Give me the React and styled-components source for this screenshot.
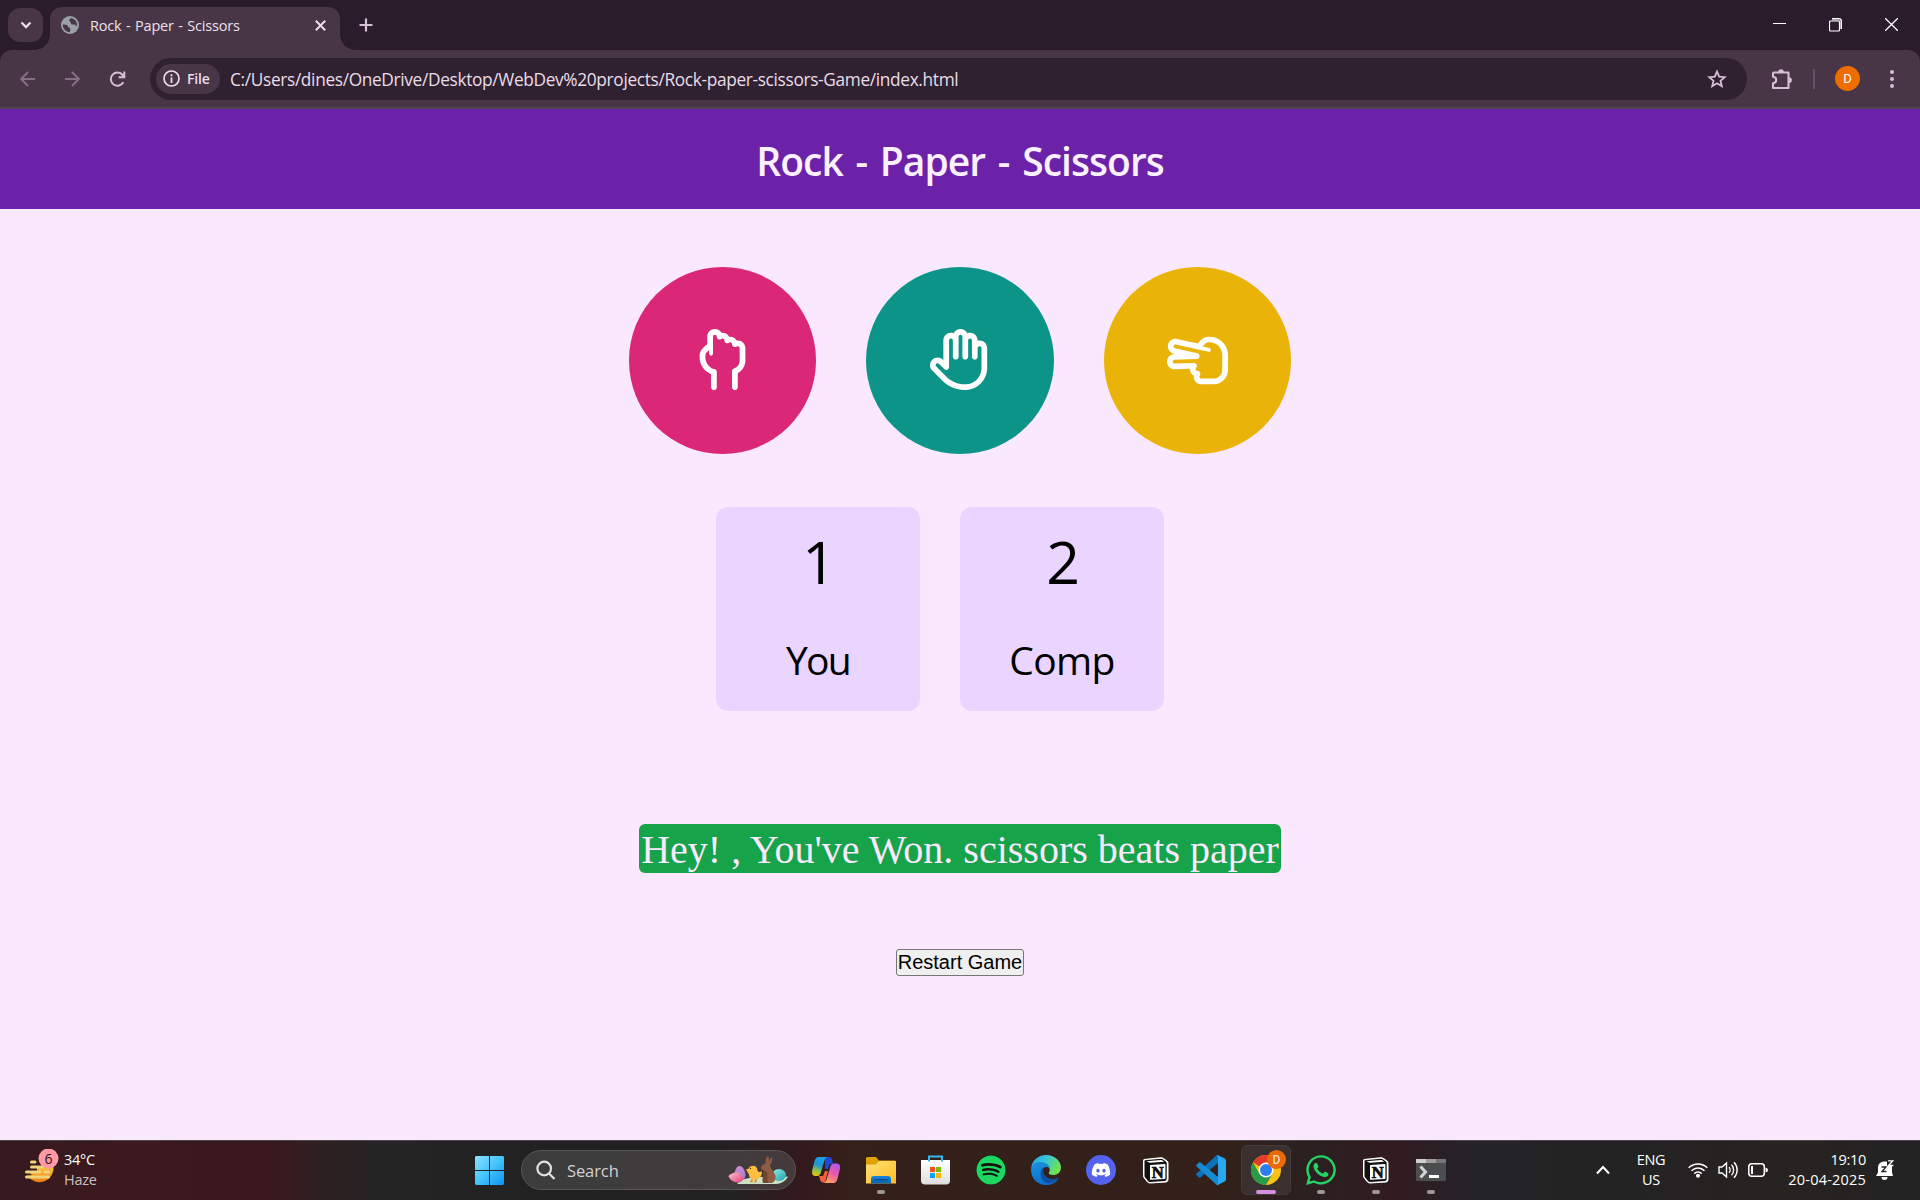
import React from "react";
import styled, { createGlobalStyle } from "styled-components";
import { FaRegHand, FaRegHandScissors, FaRegHandBackFist, FaSpotify, FaDiscord, FaWhatsapp } from "react-icons/fa6";

const ui = `"Segoe UI", "Open Sans", "Noto Sans", sans-serif`;

const GlobalStyle = createGlobalStyle`
  * { box-sizing: border-box; }
  body { margin: 0; background: #fae8ff; overflow: hidden; }
  svg { display: block; flex: none; }
`;

const Screen = styled.div`
  width: 1920px;
  height: 1200px;
  display: flex;
  flex-direction: column;
  font-family: ${ui};
`;

/* ---------- browser ---------- */
const TabStrip = styled.div`
  height: 50px;
  flex: none;
  background: #2a1c2b;
  display: flex;
  align-items: flex-start;
  padding: 7px 0 0 8px;
`;
const TabSearch = styled.div`
  width: 35px;
  height: 34px;
  margin: 1px 7px 0 0;
  border-radius: 12px;
  background: #483546;
  display: grid;
  place-items: center;
`;
const Tab = styled.div`
  position: relative;
  width: 290px;
  height: 43px;
  padding: 0 14.5px 7px 11px;
  border-radius: 12px 12px 0 0;
  background: #483546;
  display: flex;
  align-items: center;
  &::before, &::after {
    content: "";
    position: absolute;
    bottom: 0;
    width: 15px;
    height: 15px;
  }
  &::before { left: -15px; background: radial-gradient(circle at 0 0, transparent 14.5px, #483546 15px); }
  &::after { right: -15px; background: radial-gradient(circle at 100% 0, transparent 14.5px, #483546 15px); }
`;
const TabTitle = styled.span`
  flex: 1;
  margin-left: 11px;
  padding-top: 1px;
  font-size: 14.5px;
  line-height: 20px;
  letter-spacing: -0.2px;
  word-spacing: 1px;
  white-space: nowrap;
  color: #ece0ea;
`;
const NewTab = styled.div`
  padding: 11px 0 0 19px;
`;
const WindowButtons = styled.div`
  margin-left: auto;
  display: flex;
  gap: 43px;
  padding: 11px 22px 0 0;
`;
const ToolbarBack = styled.div`
  height: 59px;
  flex: none;
  background: #2a1c2b;
`;
const Toolbar = styled.div`
  height: 59px;
  background: #483546;
  border-radius: 12px 12px 0 0;
  border-bottom: 2px solid #4b454f;
  display: flex;
  align-items: center;
  padding: 0 22px 0 20px;
`;
const NavButtons = styled.div`
  display: flex;
  gap: 29.5px;
  width: 130px;
`;
const Address = styled.div`
  width: 1597px;
  height: 42px;
  margin-right: 24px;
  border-radius: 21px;
  background: #302131;
  display: flex;
  align-items: center;
  padding: 0 20px 0 6px;
`;
const Chip = styled.div`
  width: 64px;
  height: 30px;
  border-radius: 15px;
  background: #483546;
  display: flex;
  align-items: center;
  gap: 7px;
  padding-left: 7px;
  font-size: 14px;
  font-weight: 600;
  letter-spacing: -0.2px;
  color: #ecdcea;
`;
const Url = styled.span`
  flex: 1;
  margin-left: 10px;
  padding-top: 2px;
  font-size: 17.3px;
  line-height: 24px;
  letter-spacing: -0.34px;
  white-space: nowrap;
  color: #e9dde8;
`;
const Divider = styled.div`
  width: 2px;
  height: 20px;
  margin: 0 20px;
  background: #66506a;
`;
const Avatar = styled.div`
  width: 25px;
  height: 25px;
  border-radius: 50%;
  background: #ef6c00;
  color: #fff;
  font: 13px Roboto, sans-serif;
  display: grid;
  place-items: center;
`;

/* ---------- game ---------- */
const Header = styled.header`
  height: 100px;
  flex: none;
  background: #6b21a8;
  display: flex;
  align-items: center;
  justify-content: center;
  padding-top: 2px;
  color: #faf0ff;
  font-size: 39px;
  font-weight: 600;
  white-space: nowrap;
  letter-spacing: -0.95px;
  word-spacing: 3.5px;
`;
const Game = styled.main`
  height: 931px;
  flex: none;
  background: #fae8ff;
  display: flex;
  flex-direction: column;
  align-items: center;
`;
const Choices = styled.div`
  display: flex;
  gap: 50px;
  margin-top: 58px;
`;
const Choice = styled.div`
  width: 187.5px;
  height: 187px;
  padding-bottom: 3px;
  border-radius: 50%;
  background: ${(p) => p.$color};
  color: #fff;
  font-size: 61px;
  display: grid;
  place-items: center;
`;
const Scores = styled.div`
  display: flex;
  gap: 40px;
  margin: 53px 40px 0 0;
`;
const Score = styled.div`
  width: 204px;
  height: 204px;
  border-radius: 12px;
  background: #e9d5ff;
  color: #000;
  display: flex;
  flex-direction: column;
  align-items: center;
`;
const Points = styled.div`
  margin-top: 11px;
  padding-left: 2px;
  font-size: 59px;
  line-height: 86px;
`;
const Label = styled.div`
  margin-top: 26px;
  font-size: 39px;
  line-height: 60px;
  letter-spacing: ${(p) => p.$track};
`;
const Message = styled.div`
  margin-top: 113px;
  width: 642px;
  height: 49px;
  border-radius: 6px;
  background: #16a34a;
  color: #fae8ff;
  font: 40px/51px "Times New Roman", "Liberation Serif", serif;
  text-align: center;
  white-space: nowrap;
`;
const Restart = styled.button`
  margin: 76px 0 0;
  width: 128px;
  height: 27px;
  padding: 0 0 1px;
  border: 1.25px solid #767676;
  border-radius: 3px;
  background: #efefef;
  color: #000;
  font: 20px/24px Arial, "Liberation Sans", sans-serif;
  white-space: nowrap;
`;

/* ---------- taskbar ---------- */
const Taskbar = styled.footer`
  height: 60px;
  flex: none;
  border-top: 1px solid #4c474b;
  background: linear-gradient(90deg, #351a1f 0, #3b191e 120px, #39191e 280px, #2d2022 325px, #242424 385px, #212122 560px, #222122 730px, #33191d 800px, #35201b 850px, #33201a 1220px, #2b2020 1310px, #321b21 1395px, #242328 1470px, #232324 1560px, #262321 1800px, #232324 1920px);
  display: flex;
  align-items: center;
  padding-bottom: 1px;
  color: #fff;
`;
const Weather = styled.div`
  width: 475px;
  padding-left: 24px;
  display: flex;
  align-items: center;
  gap: 4px;
`;
const WeatherBadge = styled.div`
  padding-bottom: 4px;
`;
const Lines = styled.div`
  display: flex;
  flex-direction: column;
  align-items: ${(p) => p.$align || "flex-start"};
  padding-bottom: 1px;
  font-size: 14.5px;
  line-height: 20px;
  letter-spacing: -0.3px;
  white-space: nowrap;
`;
const Dim = styled.span`
  color: #c9bfc1;
`;
const DateText = styled.span`
  letter-spacing: 0.2px;
`;
const SearchBox = styled.div`
  width: 275px;
  height: 40px;
  margin: 0 2px 0 17px;
  border: 1px solid #5a5656;
  border-radius: 20px;
  background: linear-gradient(90deg, #3c3c3c, #3f3c3d 60%, #45393c);
  display: flex;
  align-items: center;
  padding: 0 7px 0 14px;
  font-size: 16.5px;
  letter-spacing: -0.1px;
  color: #d2d0d1;
`;
const SearchLabel = styled.span`
  flex: 1;
  margin-left: 11px;
`;
const Slot = styled.div`
  position: relative;
  width: 55px;
  height: 58px;
  display: grid;
  place-items: center;
  &::after {
    content: "";
    position: absolute;
    display: ${(p) => (p.$state ? "block" : "none")};
    bottom: 5px;
    left: 50%;
    width: ${(p) => (p.$state === "active" ? "20px" : "8px")};
    height: 4px;
    border-radius: 2px;
    transform: translateX(-50%);
    background: ${(p) => (p.$state === "active" ? "#d68fe0" : "#9d9896")};
  }
`;
const ActiveTile = styled.div`
  width: 50px;
  height: 50px;
  border-radius: 6px;
  border: 1px solid #443a39;
  background: #3a302f;
  display: grid;
  place-items: center;
`;
const Glyph = styled.span`
  display: flex;
  color: ${(p) => p.$color};
`;
const Round = styled.span`
  width: 30px;
  height: 30px;
  border-radius: 50%;
  background: ${(p) => p.$bg};
  color: ${(p) => p.$color};
  font-size: ${(p) => p.$size};
  display: grid;
  place-items: center;
`;
const Tray = styled.div`
  margin-left: auto;
  display: flex;
  align-items: center;
  padding-right: 26px;
`;
const TrayIcons = styled.div`
  display: flex;
  align-items: center;
  gap: 10px;
  margin: 0 21px 0 22px;
`;
const TrayLang = styled.div`
  width: 30px;
  margin-left: 26px;
`;
const Clock = styled.div`
  width: 77px;
  margin-right: 10px;
`;

const Line = ({ w, h, d, c = "#eadfe8", s = 2 }) => (
  <svg width={w} height={h} viewBox={`0 0 ${w} ${h}`} fill="none" stroke={c} strokeWidth={s}>
    <path d={d} />
  </svg>
);

const Globe = () => (
  <svg width="18" height="18" viewBox="0 0 18 18">
    <circle cx="9" cy="9" r="9" fill="#9aa0a6" />
    <path d="M1.8 8.4c2.3 0 4 .2 4.7 1.1.6.8.3 1.7 1.5 2 1.3.3 1.3 1.1 1.2 2.1 0 1 .1 1.7-.6 2.6A7.2 7.2 0 0 1 1.8 8.4zM9.800 1.900c-.4 1.200-1.800 1.500-1.600 2.700.2 1.100 1.300 1 1.600 1.900.3 1 0 1.700 1.300 1.900 1.300.3 2.100-.3 3.300.5.9.6 1 1.300 1.700 1.400A7.300 7.300 0 0 0 9.800 1.900z" fill="#483546" />
  </svg>
);

const Puzzle = () => (
  <svg width="22" height="22" viewBox="0 0 22 22">
    <path d="M3 4.500h14.500v15.500H2V15.200c2.200-.2 3.200-1.500 3.200-3.200S4.200 9.100 2 8.800V5.500a1 1 0 0 1 1-1z" fill="none" stroke="#d6bfd6" strokeWidth="2.100" strokeLinejoin="round" />
    <path d="M7.200 4a2.800 2.800 0 0 1 5.600 0zM18 9.200a2.900 2.900 0 0 1 0 5.800z" fill="#d6bfd6" />
  </svg>
);

const WeatherIcon = () => (
  <svg width="36" height="38" viewBox="0 0 36 38">
    <defs>
      <linearGradient id="sun" x1="0" y1="0" x2="0" y2="1">
        <stop offset="0" stopColor="#fcc53c" />
        <stop offset="1" stopColor="#ef7a14" />
      </linearGradient>
    </defs>
    <path d="M3.500 26.500H8l-3-4h8V17h16.500A14.300 14.300 0 0 1 3.500 27z" fill="url(#sun)" />
    <path d="M7.500 13h3.500M7.500 18H18M2.500 23H16M21 23h4M2.500 28h22" stroke="#f0d47c" strokeWidth="3" strokeLinecap="round" />
    <circle cx="24.500" cy="9.500" r="10" fill="#ff99a4" />
    <text x="24.500" y="14.500" textAnchor="middle" fontSize="14" fontFamily="Open Sans, sans-serif" fill="#2b1114">6</text>
  </svg>
);

const WindowsLogo = () => (
  <svg width="29" height="29" viewBox="0 0 29 29">
    <defs>
      <linearGradient id="win" x1="0" y1="0" x2="1" y2="1">
        <stop offset="0" stopColor="#8de1ff" />
        <stop offset=".5" stopColor="#45c3fb" />
        <stop offset="1" stopColor="#0f93f5" />
      </linearGradient>
    </defs>
    <path d="M1 0h13v14H0V1zM15 0h13l1 1v13H15zM0 15h14v14H1l-1-1zM15 15h14v13l-1 1H15z" fill="url(#win)" />
  </svg>
);

const Easter = () => (
  <svg width="60" height="30" viewBox="0 0 60 30">
    <defs>
      <linearGradient id="eggA" x1="0" y1="0" x2="0" y2="1"><stop offset="0" stopColor="#d88ad3" /><stop offset="1" stopColor="#8f7fd0" /></linearGradient>
      <linearGradient id="eggB" x1="0" y1="0" x2="1" y2="1"><stop offset="0" stopColor="#ffc0d2" /><stop offset="1" stopColor="#e2427f" /></linearGradient>
      <linearGradient id="eggC" x1="0" y1="0" x2="1" y2="1"><stop offset="0" stopColor="#8defe5" /><stop offset="1" stopColor="#1d9fae" /></linearGradient>
    </defs>
    <path d="M9 29c4-5 12-7 24-7s19 0 27-.5c-2 4-6 7-12 7.500z" fill="#c9e3c8" />
    <path d="M11.500 11c3 0 6 5 6 9 0 3-2 5-5 5s-6-2-6-6c0-3 2-8 5-8z" fill="url(#eggA)" />
    <path d="M.5 21c3-3 8-5 12-2 3 2.500 3.500 5.500 1 7.500C8 29 2 26 .5 21z" fill="url(#eggB)" />
    <ellipse cx="51" cy="20" rx="7" ry="6" fill="url(#eggC)" />
    <path d="M18 14.500l3-1c0-3 7-4 8 0 .5 2 .5 3 2 3.500l3-.5c0 4-2 8-7 8-4 0-6-2-6-5z" fill="#ffbe3d" />
    <path d="M24 24v2.500h-2M28 24v2.500h-2" stroke="#e78125" strokeWidth="1.300" fill="none" />
    <circle cx="22.500" cy="13.500" r=".7" fill="#5a3514" />
    <path d="M35 28c-1-4 1-8 1-12.500-3-1-4-3-2-5 1-1 3-2 4-2-1-3 0-6 2-7.500 1 2 1 3.500 1 5.500 1-2.500 2-4 3.500-4.500 0 3-1 6-2.500 8 0 4 5 6.500 5.500 11.500.3 3-1 6-4 6.500z" fill="#8f5b43" />
    <path d="M36 16c-1 4-2 8-1 12h5c-1-4 0-8-1-12z" fill="#754431" />
  </svg>
);

const Copilot = () => (
  <svg width="28" height="26" viewBox="0 0 28 26">
    <defs>
      <linearGradient id="cpA" x1=".4" y1="0" x2=".2" y2="1"><stop offset="0" stopColor="#18a2ee" /><stop offset=".4" stopColor="#2196cf" /><stop offset=".7" stopColor="#8cc152" /><stop offset="1" stopColor="#f5c400" /></linearGradient>
      <linearGradient id="cpB" x1=".7" y1="0" x2=".3" y2="1"><stop offset="0" stopColor="#b057e8" /><stop offset=".5" stopColor="#ea5aa8" /><stop offset="1" stopColor="#ffa25c" /></linearGradient>
    </defs>
    <path d="M13 0h4c2.500 0 3 2 3.700 5L21 7h-3l-2 5-3 0z" fill="#2148cf" />
    <path d="M7 19h4l2-5 3 0-3 11.500h-2C8.500 25.500 8 22 7 19z" fill="#f2603c" />
    <path d="M6.500 0H15c-2 1-2.500 3-3.300 6L9 15c-1 3.500-2 4-4 4H3.500C-.4 19-.3 15.500.5 12L2 6C3 2 4 0 6.500 0z" fill="url(#cpA)" />
    <path d="M21.500 26H12c2-1 2.500-3 3.300-6L18 11c1-3.500 2-4.500 4-4.500h2.500c4 0 3.900 3.500 3.100 7L26 20c-1 4-2 6-4.500 6z" fill="url(#cpB)" />
  </svg>
);

const Folder = () => (
  <svg width="30" height="28" viewBox="0 0 30 28">
    <defs>
      <linearGradient id="fol" x1="0" y1="0" x2="1" y2="1"><stop offset="0" stopColor="#ffe07b" /><stop offset="1" stopColor="#fdbe20" /></linearGradient>
      <linearGradient id="folb" x1="0" y1="0" x2="0" y2="1"><stop offset="0" stopColor="#1785d8" /><stop offset="1" stopColor="#0a62b0" /></linearGradient>
    </defs>
    <path d="M0 2.500Q0 1 1.500 1H10l3 3.500h16v8H0z" fill="#e0a000" />
    <path d="M0 8.500h9.500L13 5h17v22.500H0z" fill="url(#fol)" />
    <path d="M5 27.500V23q0-3 3-3h14q3 0 3 3v4.500z" fill="url(#folb)" />
    <path d="M8.500 23.700h13" stroke="#0a4685" strokeWidth="1.200" />
  </svg>
);

const Store = () => (
  <svg width="29" height="30" viewBox="0 0 29 30">
    <defs><linearGradient id="sto" x1="0" y1="0" x2="0" y2="1"><stop offset="0" stopColor="#fff" /><stop offset="1" stopColor="#dedede" /></linearGradient></defs>
    <path d="M0 5h29v20.500q0 4-4 4H4q-4 0-4-4z" fill="url(#sto)" />
    <path d="M8 6.500V1.500h13v5" fill="none" stroke="#33b8ec" strokeWidth="2" />
    <path d="M9 12h5v5H9z" fill="#f25022" /><path d="M15 12h5v5h-5z" fill="#7fba00" />
    <path d="M9 18h5v5H9z" fill="#00a4ef" /><path d="M15 18h5v5h-5z" fill="#ffb900" />
  </svg>
);

const Edge = () => (
  <svg width="30" height="30" viewBox="0 0 30 30">
    <defs>
      <linearGradient id="edT" x1="0" y1="0" x2="1" y2=".5"><stop offset="0" stopColor="#2b9be0" /><stop offset=".45" stopColor="#34c4dc" /><stop offset="1" stopColor="#6fe34f" /></linearGradient>
      <linearGradient id="edB" x1="0" y1="0" x2=".4" y2="1"><stop offset="0" stopColor="#1a93dd" /><stop offset="1" stopColor="#0a6fd0" /></linearGradient>
    </defs>
    <path d="M.2 13C1 5.500 7 0 15 0c8.500 0 15 6 15 12.500 0 4.500-3.300 7.500-7.500 7.500-3.500 0-5.500-1.300-4.500-2.800 2.200-3-.2-6.200-4-7.700C8 7.500 3 9.500.2 13z" fill="url(#edT)" />
    <path d="M.1 14C1 9 5 6.800 9.500 7c5 .2 9.300 3 9.400 7-3-4-7.900-1.500-7.900 3.500 0 6 5 10 11.500 8.500l4.500-1.500C24.500 28 20 30 15 30 6 30-.6 22.500.1 14z" fill="url(#edB)" />
    <path d="M11.800 13c-3 3-3.500 10.500 2 14 4.500 2.800 9.500 1 13.500-3.500.5-.8 0-1.200-.7-.8-5.500 2.800-12.600.6-14.100-5.200-.4-1.700-.6-3.200-.7-4.500z" fill="#0e4f9f" />
  </svg>
);

const Notion = () => (
  <svg width="26" height="27" viewBox="0 0 26 27">
    <path d="M1 2.500L18 .7q1.500 0 2.500.8L24 4q1 .8 1 2v16.500q0 2.200-2 2.500L7 26q-1.500 0-2.500-1L1.300 21q-.8-1-.8-2.500V3.500q0-1 .5-1z" fill="#fff" stroke="#fff" />
    <path d="M2 3.200l16-1.500q1 0 1.800.5l3 2.300q.9.700.9 2V22q0 1.700-1.700 1.900L7 24.900q-1.300 0-2-.9l-3-3.800q-.5-.7-.5-2V4q0-.7.5-.8z" fill="#111" />
    <path d="M3.300 4.200l14.500-1.300q.8 0 1.300.4l2 1.500-14 1q-.8 0-1.400-.5z" fill="#fff" />
    <path d="M7 8.700q0-.7.700-.8l14-.8q.7 0 .7.700v13.400q0 .8-.8.800l-13.700.8q-.9 0-.9-.9z" fill="#fff" />
    <text x="14.700" y="20.500" textAnchor="middle" fontFamily="Liberation Serif, serif" fontWeight="700" fontSize="16.500" fill="#111" stroke="#111" strokeWidth=".7">N</text>
  </svg>
);

const VsCode = () => (
  <svg width="30" height="30" viewBox="0 0 30 30">
    <path d="M22 8L4.500 22.500q-.8.600-1.500 0L.6 20.300q-.9-.9 0-1.700L20.300.6q1-.9 2.200-.3z" fill="#0b72b9" />
    <path d="M22 22L4.500 7.500q-.8-.6-1.500 0L.6 9.700q-.9.900 0 1.700l19.700 18q1 .9 2.200.3z" fill="#168bd2" />
    <path d="M22 .3l6.300 3q1.700.8 1.700 2.500v18.400q0 1.700-1.700 2.500l-6.300 3q-1.200.4-2-.4 2 .5 2-2V2.700q0-2.500-2-2Q20.800-.1 22 .3z" fill="#2aa7f2" />
  </svg>
);

const Chrome = () => (
  <svg width="40" height="40" viewBox="0 0 40 40">
    <circle cx="20" cy="20" r="15" fill="#fbc116" />
    <path d="M20 20L7 12.500A15 15 0 0 1 33 12.500H20z" fill="#e33b2e" />
    <path d="M7 12.500A15 15 0 0 0 20 35l6.500-11.300L20 20l-6.500 3.700z" fill="#2a9b48" />
    <circle cx="20" cy="20" r="7.500" fill="#fff" />
    <circle cx="20" cy="20" r="6" fill="#2f7cf0" />
    <circle cx="30.500" cy="9.500" r="9.500" fill="#e96a07" />
    <text x="30.500" y="13.800" textAnchor="middle" fontFamily="Roboto, sans-serif" fontWeight="500" fontSize="12" fill="#ffd9ba">D</text>
  </svg>
);

const Terminal = () => (
  <svg width="30" height="22" viewBox="0 0 30 22">
    <path d="M0 0h30v20.500q0 1.500-1.500 1.500h-27Q0 22 0 20.500z" fill="#4b4d4f" />
    <path d="M0 0h10v4H0z" fill="#d0cecf" /><path d="M10 0h10v4H10z" fill="#a09d9e" /><path d="M20 0h10v4H20z" fill="#777475" />
    <path d="M4.500 7.500l5 5.500-5 5.500" fill="none" stroke="#d5d5d5" strokeWidth="3" />
    <path d="M13 16h10v3H13z" fill="#fff" />
  </svg>
);

const Bell = () => (
  <svg width="18" height="20" viewBox="0 0 18 20">
    <path d="M2 7a6 6 0 0 1 6-5.500h3V6h5v6.500l1 3.500H0l2-3.500z" fill="#fff" />
    <path d="M5.500 17h6a3 3 0 0 1-6 0z" fill="#fff" />
    <path d="M5.500 7h4.500L6 11.500h4.500" fill="none" stroke="#232324" strokeWidth="1.300" />
    <path d="M12 .9h4.700L12.500 5.500h4.800" fill="none" stroke="#fff" strokeWidth="1.400" />
  </svg>
);

export default function App() {
  return (
    <Screen>
      <GlobalStyle />
      <TabStrip>
        <TabSearch><Line w={12} h={8} d="M1.500 1.500L6 6l4.500-4.500" s={2.300} /></TabSearch>
        <Tab>
          <Globe />
          <TabTitle>Rock - Paper - Scissors</TabTitle>
          <Line w={11} h={11} d="M.8.800l9.400 9.400M10.200.800L.8 10.200" s={2} />
        </Tab>
        <NewTab><Line w={14} h={14} d="M7 .5v13M.5 7h13" c="#d6bfd6" s={2.200} /></NewTab>
        <WindowButtons>
          <Line w={13} h={13} d="M0 5.500h13" c="#fff" s={1} />
          <svg width="13" height="14" viewBox="0 0 13 14" fill="none">
            <path d="M3 1.500h7.500q1.500 0 1.500 1.500v8" stroke="#a89fa9" strokeWidth="2" />
            <path d="M3 .5h7.500q2 0 2 2V11" stroke="#fff" />
            <rect x=".5" y="3" width="10" height="10" rx="1" stroke="#fff" strokeWidth="1.200" />
          </svg>
          <Line w={13} h={13} d="M0 0l13 13M13 0L0 13" c="#fff" s={1.300} />
        </WindowButtons>
      </TabStrip>
      <ToolbarBack>
        <Toolbar>
          <NavButtons>
            <Line w={15} h={16} d="M15 8H1.500M8 1L1.200 8 8 15" c="#856d85" />
            <Line w={15} h={16} d="M0 8h13.500M7 1l6.800 7L7 15" c="#856d85" />
            <Line w={17} h={16} d="M14.300 11.200A6.600 6.600 0 1 1 13.600 4l1.400 1.700M15.300.500v5.700H9.600" c="#d6bfd6" />
          </NavButtons>
          <Address>
            <Chip>
              <svg width="17" height="17" viewBox="0 0 17 17">
                <circle cx="8.500" cy="8.500" r="7.500" fill="none" stroke="#ecdcea" strokeWidth="1.700" />
                <path d="M7.600 7.500h1.800V13H7.600zM7.600 4.300h1.800v1.900H7.600z" fill="#ecdcea" />
              </svg>
              File
            </Chip>
            <Url>C:/Users/dines/OneDrive/Desktop/WebDev%20projects/Rock-paper-scissors-Game/index.html</Url>
            <Line w={20} h={19} d="M10 2.600l2.200 5.100 5.500.5-4.200 3.600 1.300 5.400-4.800-2.900-4.800 2.900 1.300-5.400-4.200-3.600 5.500-.5z" c="#d6bfd6" s={1.800} />
          </Address>
          <Puzzle />
          <Divider />
          <Avatar>D</Avatar>
          <svg width="38" height="20" viewBox="0 0 38 20" fill="#d6bfd6">
            <circle cx="32" cy="3" r="2" /><circle cx="32" cy="10" r="2" /><circle cx="32" cy="17" r="2" />
          </svg>
        </Toolbar>
      </ToolbarBack>

      <Header>Rock - Paper - Scissors</Header>
      <Game>
        <Choices>
          <Choice $color="#db2777"><FaRegHandBackFist /></Choice>
          <Choice $color="#0d9488"><FaRegHand /></Choice>
          <Choice $color="#eab308"><FaRegHandScissors /></Choice>
        </Choices>
        <Scores>
          <Score><Points>1</Points><Label $track="-1.8px">You</Label></Score>
          <Score><Points>2</Points><Label $track="-0.6px">Comp</Label></Score>
        </Scores>
        <Message>Hey! , You've Won. scissors beats paper</Message>
        <Restart>Restart Game</Restart>
      </Game>

      <Taskbar>
        <Weather>
          <WeatherBadge><WeatherIcon /></WeatherBadge>
          <Lines><span>34°C</span><Dim>Haze</Dim></Lines>
        </Weather>
        <WindowsLogo />
        <SearchBox>
          <Line w={20} h={20} d="M15 8.500a6.800 6.800 0 1 1-13.600 0a6.800 6.800 0 1 1 13.600 0M13 13.500l5.500 5.500" c="#e3e0e1" s={2.200} />
          <SearchLabel>Search</SearchLabel>
          <Easter />
        </SearchBox>
        <Slot><Copilot /></Slot>
        <Slot $state="open"><Folder /></Slot>
        <Slot><Store /></Slot>
        <Slot><Round $bg="#15100e" $color="#1ed760" $size="30px"><FaSpotify /></Round></Slot>
        <Slot><Edge /></Slot>
        <Slot><Round $bg="#5562ee" $color="#fff" $size="20px"><FaDiscord /></Round></Slot>
        <Slot><Notion /></Slot>
        <Slot><VsCode /></Slot>
        <Slot $state="active"><ActiveTile><Chrome /></ActiveTile></Slot>
        <Slot $state="open"><Glyph $color="#25d366"><FaWhatsapp size={34} /></Glyph></Slot>
        <Slot $state="open"><Notion /></Slot>
        <Slot $state="open"><Terminal /></Slot>
        <Tray>
          <Line w={14} h={10} d="M1 8.500L7 2l6 6.500" c="#fff" s={2} />
          <TrayLang><Lines $align="center"><span>ENG</span><span>US</span></Lines></TrayLang>
          <TrayIcons>
            <svg width="20" height="16" viewBox="0 0 20 16" fill="none" stroke="#fff" strokeWidth="1.500">
              <path d="M.7 5.800a13 13 0 0 1 18.600 0M3.500 8.800a9 9 0 0 1 13 0M6.300 11.600a5.200 5.200 0 0 1 7.400 0" />
              <circle cx="10" cy="13.800" r="1.300" fill="#fff" />
            </svg>
            <svg width="20" height="18" viewBox="0 0 20 18" fill="none" stroke="#fff" strokeWidth="1.400">
              <path d="M1 6h3l4.500-4v14L4 12H1zM11 6.200a4 4 0 0 1 0 5.600M13.500 3.800a7.500 7.500 0 0 1 0 10.400M16 1.300a11 11 0 0 1 0 15.400" />
            </svg>
            <svg width="20" height="14" viewBox="0 0 20 14">
              <rect x=".8" y=".8" width="15.500" height="12.400" rx="3" fill="none" stroke="#fff" strokeWidth="1.500" />
              <path d="M3 3h2v8H3zM17.500 4.500q2.500.5 2.500 2.500t-2.500 2.500z" fill="#fff" />
            </svg>
          </TrayIcons>
          <Clock><Lines $align="flex-end"><span>19:10</span><DateText>20-04-2025</DateText></Lines></Clock>
          <Bell />
        </Tray>
      </Taskbar>
    </Screen>
  );
}
